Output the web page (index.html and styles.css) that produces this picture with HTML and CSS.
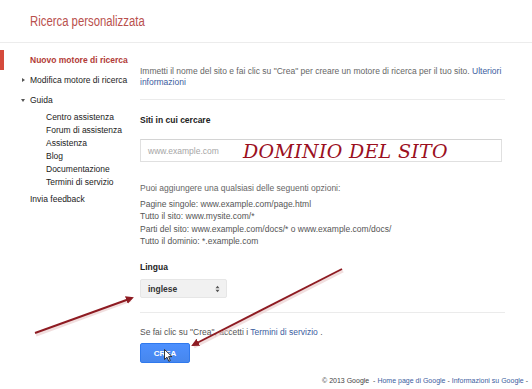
FILE: index.html
```html
<!DOCTYPE html>
<html lang="it">
<head>
<meta charset="utf-8">
<title>Ricerca personalizzata</title>
<link rel="stylesheet" href="styles.css">
</head>
<body>
<header class="top">
  <h1 class="title">Ricerca personalizzata</h1>
</header>
<div class="layout">
  <nav class="side">
    <div class="item active">Nuovo motore di ricerca</div>
    <div class="item"><span class="tri tri-right"></span>Modifica motore di ricerca</div>
    <div class="item"><span class="tri tri-down"></span>Guida</div>
    <ul class="sub">
      <li>Centro assistenza</li>
      <li>Forum di assistenza</li>
      <li>Assistenza</li>
      <li>Blog</li>
      <li>Documentazione</li>
      <li>Termini di servizio</li>
    </ul>
    <div class="item">Invia feedback</div>
  </nav>
  <main class="main">
    <p class="intro">Immetti il nome del sito e fai clic su "Crea" per creare un motore di ricerca per il tuo sito. <a class="link">Ulteriori</a><br><a class="link">informazioni</a></p>
    <hr class="rule rule-top">
    <h2 class="label label-sites">Siti in cui cercare</h2>
    <div class="input">
      <span class="placeholder">www.example.com</span>
      <span class="stamp">DOMINIO DEL SITO</span>
    </div>
    <p class="hint">Puoi aggiungere una qualsiasi delle seguenti opzioni:</p>
    <ul class="examples">
      <li>Pagine singole: www.example.com/page.html</li>
      <li>Tutto il sito: www.mysite.com/*</li>
      <li>Parti del sito: www.example.com/docs/* o www.example.com/docs/</li>
      <li>Tutto il dominio: *.example.com</li>
    </ul>
    <h2 class="label label-lang">Lingua</h2>
    <div class="select">
      <span>inglese</span>
      <svg class="spin" width="5" height="8" viewBox="0 0 5 8"><path d="M0.5 3.2 L2.5 0.8 L4.5 3.2 Z M0.5 4.8 L2.5 7.2 L4.5 4.8 Z" fill="#555"/></svg>
    </div>
    <hr class="rule rule-bottom">
    <p class="terms">Se fai clic su "Crea", accetti i <a class="link">Termini di servizio</a> .</p>
    <div class="btn-row">
      <button class="btn">CREA</button>
      <svg class="cursor" width="9" height="13" viewBox="0 0 9 13"><path d="M0.5 0.5 L0.5 10.5 L3 8.2 L4.8 12.3 L6.3 11.6 L4.6 7.6 L8 7.6 Z" fill="#fff" stroke="#222" stroke-width="0.9"/></svg>
    </div>
  </main>
</div>
<footer class="foot">© 2013 Google &nbsp;- <a class="link">Home page di Google</a> - <a class="link">Informazioni su Google</a> -</footer>
<svg class="arrows" width="532" height="389" viewBox="0 0 532 389">
  <defs>
    <marker id="head" markerWidth="8" markerHeight="8" refX="6" refY="4" orient="auto" markerUnits="userSpaceOnUse">
      <path d="M0 0 L8 4 L0 8 Z" fill="#8e1b22"/>
    </marker>
  </defs>
  <g stroke="#e9c9c9" stroke-width="3" opacity="0.6">
    <line x1="36" y1="335" x2="131" y2="300"/>
    <line x1="343" y1="271" x2="194" y2="347"/>
  </g>
  <g stroke="#8e1b22" stroke-width="1.9" marker-end="url(#head)">
    <line x1="35" y1="333" x2="132" y2="298"/>
    <line x1="342" y1="269" x2="193" y2="345"/>
  </g>
</svg>
</body>
</html>
```
FILE: styles.css
```css
* { box-sizing: border-box; }
html, body { margin: 0; padding: 0; }
body {
  width: 532px;
  height: 389px;
  overflow: hidden;
  background: #fff;
  font-family: "Liberation Sans", Arial, sans-serif;
  font-size: 8.5px;
  color: #222;
  position: relative;
}
.top {
  height: 43px;
  border-bottom: 1px solid #ececec;
  padding-left: 30px;
  display: flex;
  align-items: center;
}
.title {
  margin: 0;
  font-weight: normal;
  font-size: 14px;
  color: #b9504d;
  white-space: nowrap;
  transform: scaleX(0.81);
  transform-origin: left center;
}
.layout { display: flex; }
.side {
  width: 140px;
  flex: none;
  padding: 7px 0 0 30px;
  font-size: 8.5px;
  color: #222;
}
.item {
  position: relative;
  line-height: 20px;
  white-space: nowrap;
}
.item.active { color: #b23a36; font-weight: bold; }
.item.active::before {
  content: "";
  position: absolute;
  left: -30px;
  top: 0;
  width: 4px;
  height: 20px;
  background: #d54a3c;
}
.tri {
  position: absolute;
  left: -8px;
  top: 8px;
  width: 0;
  height: 0;
}
.tri-right {
  border-top: 2.5px solid transparent;
  border-bottom: 2.5px solid transparent;
  border-left: 3px solid #555;
}
.tri-down {
  top: 9px;
  left: -9px;
  border-left: 2.5px solid transparent;
  border-right: 2.5px solid transparent;
  border-top: 3px solid #555;
}
.sub {
  list-style: none;
  margin: 1px 0 0;
  padding: 0 0 0 16px;
  line-height: 13px;
}
.main {
  width: 365px;
  padding-top: 23px;
  color: #666;
}
.intro { margin: 0; line-height: 11px; }
.link { color: #3b5da0; text-decoration: none; }
.rule {
  border: 0;
  border-top: 1px solid #ebebeb;
  margin: 0;
}
.rule-top { margin-top: 11px; }
.label {
  margin: 0;
  font-size: 8.5px;
  font-weight: bold;
  color: #222;
  line-height: 12px;
}
.label-sites { margin-top: 14px; }
.input {
  margin-top: 13px;
  height: 23px;
  width: 362px;
  border: 1px solid #e0e0e0;
  border-top-color: #d4d4d4;
  display: flex;
  align-items: center;
  padding-left: 7px;
  position: relative;
}
.placeholder { color: #a6a6a6; }
.stamp {
  position: absolute;
  left: 102px;
  top: 0;
  line-height: 22px;
  font-family: "DejaVu Serif", serif;
  font-style: italic;
  font-size: 19px;
  color: #9b0f1e;
  letter-spacing: 0.3px;
  white-space: nowrap;
}
.hint { margin: 20px 0 0; line-height: 12px; }
.examples {
  list-style: none;
  margin: 4px 0 0;
  padding: 0;
  line-height: 12.3px;
  color: #555;
}
.label-lang { margin-top: 14px; }
.select {
  margin-top: 6px;
  width: 87px;
  height: 19px;
  background: #f1f1f1;
  border: 1px solid #e6e6e6;
  border-radius: 2px;
  display: flex;
  align-items: center;
  justify-content: space-between;
  padding: 0 6px 0 7px;
  color: #333;
  font-weight: bold;
}
.spin { display: block; }
.rule-bottom { margin-top: 14px; }
.terms { margin: 13px 0 0; line-height: 12px; color: #555; }
.btn-row { margin-top: 5px; position: relative; height: 20px; }
.btn {
  width: 50px;
  height: 20px;
  border: 1px solid #3079ed;
  border-radius: 2px;
  background: linear-gradient(#4d90fe, #4787ed);
  color: #fff;
  font-family: "Liberation Sans", Arial, sans-serif;
  font-size: 8px;
  font-weight: bold;
  padding: 0;
}
.cursor {
  position: absolute;
  left: 24px;
  top: 6px;
}
.foot {
  position: absolute;
  right: 4px;
  bottom: 2px;
  font-size: 7px;
  line-height: 12px;
  color: #444;
}
.arrows {
  position: absolute;
  left: 0;
  top: 0;
  pointer-events: none;
}
```
